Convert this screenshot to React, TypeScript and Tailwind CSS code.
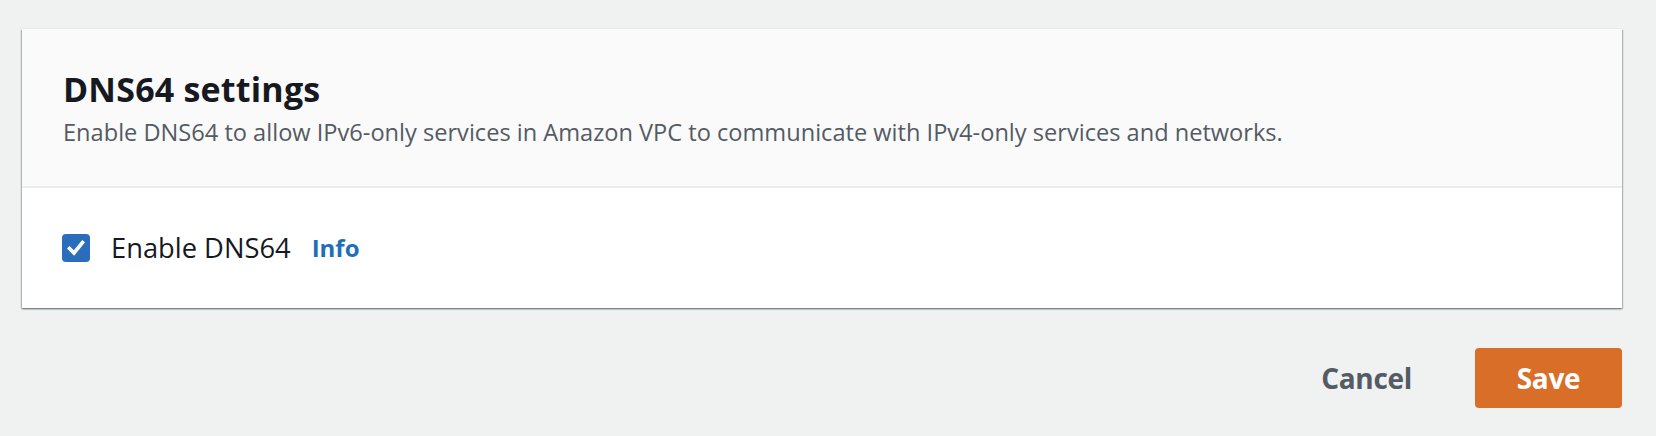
export default function App() {
  return (
    <div className="min-h-[436px] w-full bg-[#f0f1f1] pl-[22px] pr-[34px] pt-[29px] font-['Open_Sans',sans-serif]">
      <div className="bg-white shadow-[0_1px_2px_0_rgba(0,28,36,0.45),1px_1px_1px_0_rgba(0,28,36,0.15),-1px_1px_1px_0_rgba(0,28,36,0.15)]">
        <div className="h-[159px] bg-[#fafafa] border-b-2 border-[#eaeded] pl-[41px] pt-[38px]">
          <h2 className="text-[34px] leading-[44px] font-bold text-[#16191f] tracking-[0.2px]">DNS64 settings</h2>
          <p className="mt-[5px] text-[23.6px] leading-[32px] text-[#545b64]">
            Enable DNS64 to allow IPv6-only services in Amazon VPC to communicate with IPv4-only services and networks.
          </p>
        </div>
        <div className="h-[120px] flex items-center pl-[40px]">
          <label className="flex items-center">
            <span className="w-[28px] h-[28px] rounded-[4px] bg-[#2a6ebb] flex items-center justify-center">
              <svg width="28" height="28" viewBox="0 0 28 28" fill="none">
                <path d="M7.5 14.5 L12 19 L20.5 8.5" stroke="white" strokeWidth="3.6" strokeLinecap="square" strokeLinejoin="miter" />
              </svg>
            </span>
            <span className="ml-[21px] text-[27.3px] leading-[40px] text-[#16191f]">Enable DNS64</span>
          </label>
          <a className="ml-[21px] text-[24px] leading-[40px] font-bold text-[#1f6fb8]">Info</a>
        </div>
      </div>
      <div className="flex justify-end items-center mt-[40px]">
        <button className="text-[28px] tracking-[-0.3px] font-bold text-[#545b64] mr-[63px]">Cancel</button>
        <button className="w-[147px] h-[60px] rounded-[4px] bg-[#d86e28] text-[28px] tracking-[-0.3px] font-bold text-white">Save</button>
      </div>
    </div>
  );
}
